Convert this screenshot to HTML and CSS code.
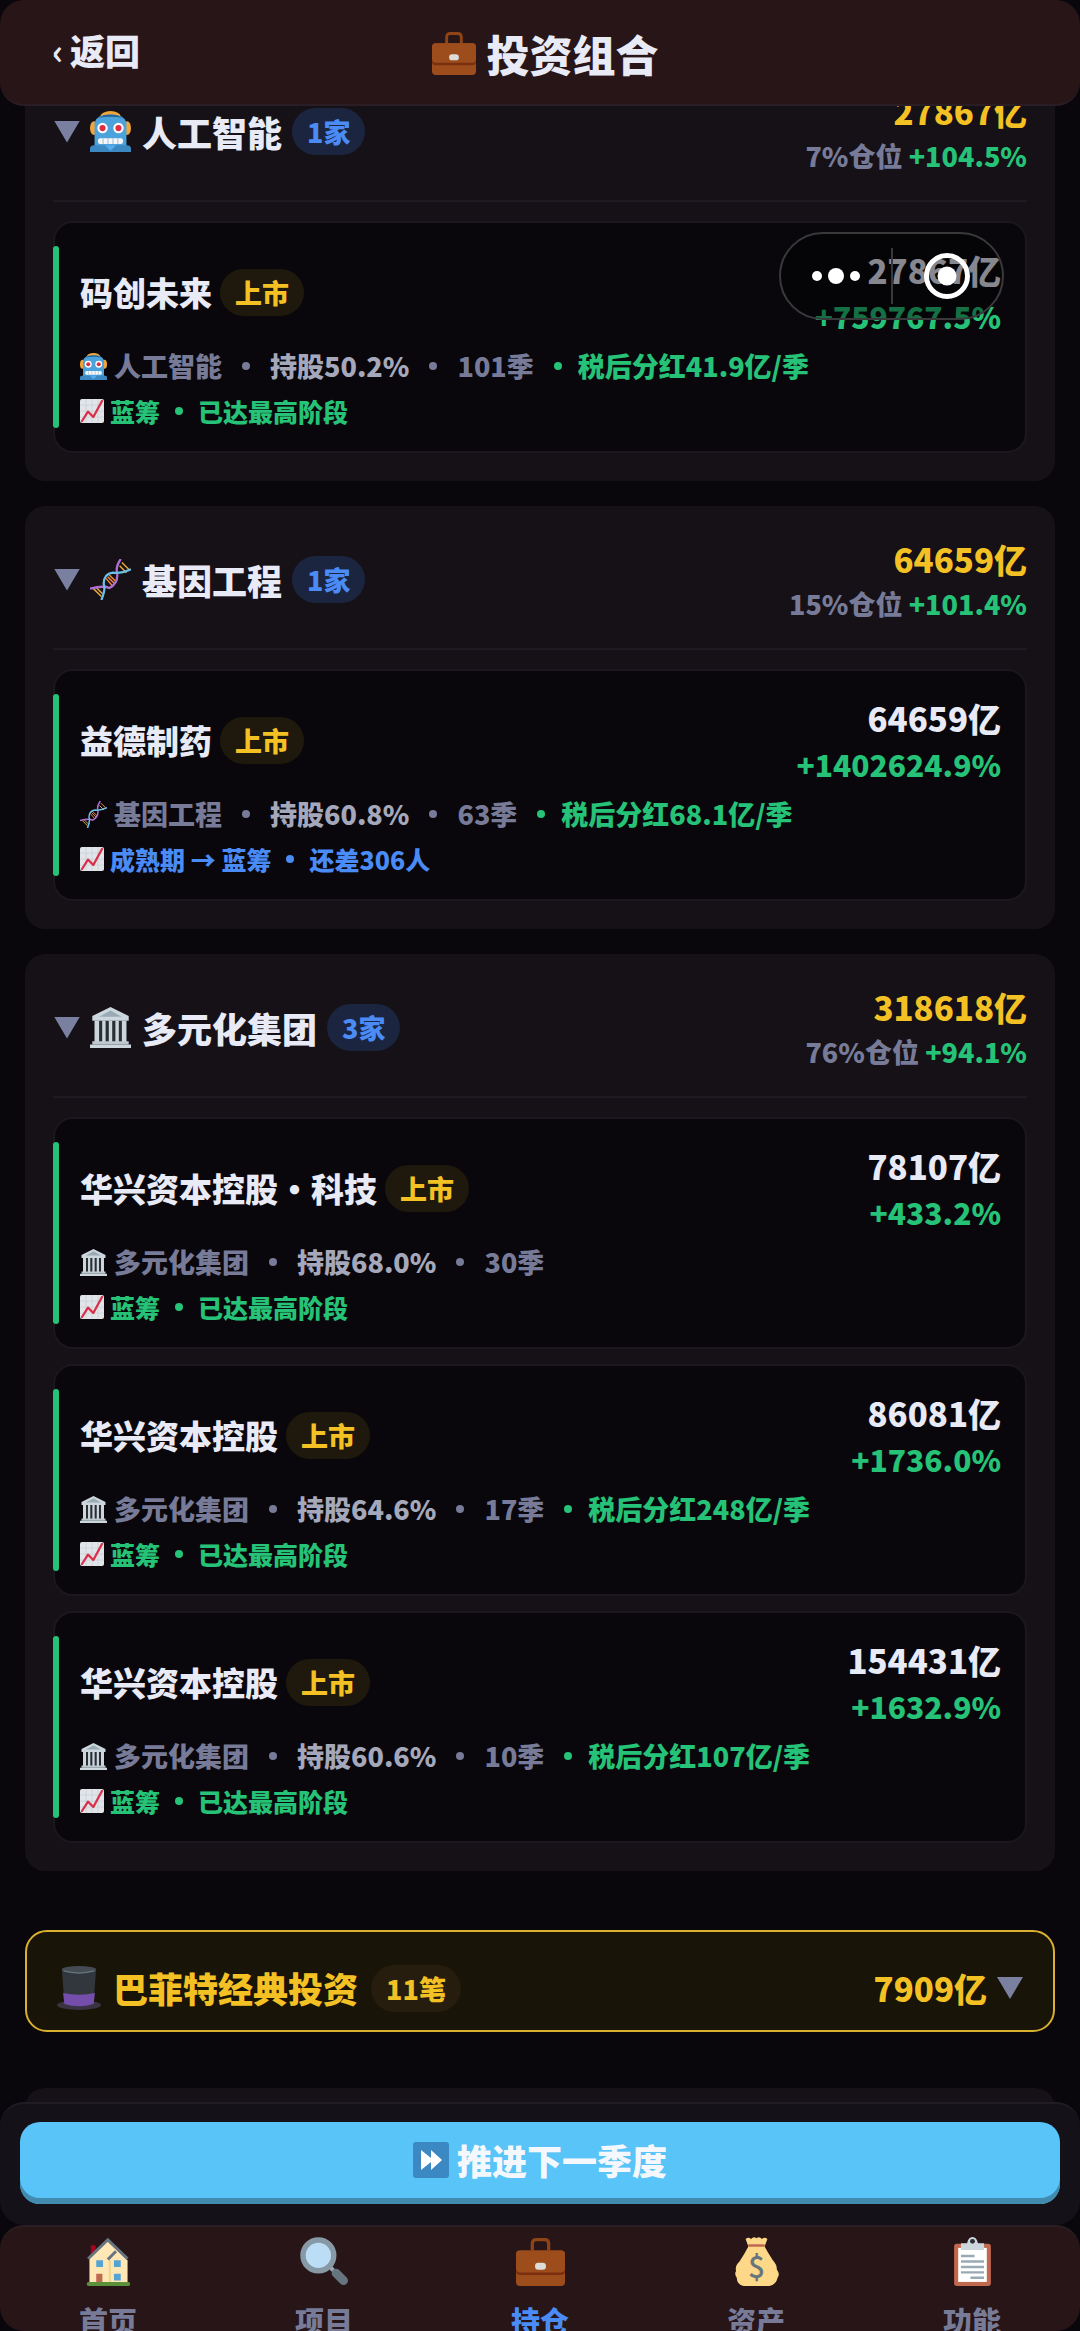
FILE: index.html
```html
<!DOCTYPE html>
<html lang="zh-CN">
<head>
  <meta charset="UTF-8">
  <meta name="viewport" content="width=device-width, initial-scale=1.0">
  <title>投资组合</title>
  <link rel="stylesheet" href="styles.css">
</head>
<body>

<!-- 图标 -->
<svg class="sprite" aria-hidden="true">
  <symbol id="i-case" viewBox="0 0 36 36">
    <path d="M12 10V5q0-3 3-3h6q3 0 3 3v5" fill="none" stroke="#8f4416" stroke-width="2.4"/>
    <rect x="0" y="10" width="36" height="26" rx="3" fill="#9c4d1b"/>
    <path d="M0 23v2q0 3 3 3h30q3 0 3-3v-2z" fill="#7a2f10"/>
    <path d="M3 10h30q3 0 3 3v10q0 3-3 3H3q-3 0-3-3V13q0-3 3-3z" fill="#9c4d1b"/>
    <rect x="14" y="19" width="8" height="5" rx="2.4" fill="#dcdcd8"/>
  </symbol>
  <symbol id="i-robot" viewBox="0 0 36 36">
    <ellipse cx="18" cy="5" rx="9" ry="5" fill="#f0a53a"/>
    <ellipse cx="3.4" cy="15" rx="3.4" ry="6" fill="#f0a53a"/>
    <ellipse cx="32.6" cy="15" rx="3.4" ry="6" fill="#f0a53a"/>
    <path d="M4 36V10Q6 3 18 3t14 7v26z" fill="#4ca3dc"/>
    <path d="M8 6q3-3 10-3t10 3q-4-1-10-1T8 6z" fill="#226699"/>
    <path d="M0 36v-3q0-3 4-3h28q4 0 4 3v3z" fill="#3b88c3"/>
    <path d="M13 30h10l-5 5z" fill="#55acee"/>
    <circle cx="11" cy="15" r="4.6" fill="#fff"/>
    <circle cx="25" cy="15" r="4.6" fill="#fff"/>
    <circle cx="11" cy="15" r="2.7" fill="#dd2e44"/>
    <circle cx="25" cy="15" r="2.7" fill="#dd2e44"/>
    <rect x="7" y="24" width="22" height="5" rx="2" fill="#f5f8fa"/>
    <path d="M11.500 24v5M15.800 24v5M20.200 24v5M24.500 24v5" stroke="#a9c4d6" stroke-width="1"/>
  </symbol>
  <symbol id="i-dna" viewBox="0 0 36 36">
    <path d="M3 26l7 7M5 24.500l6 6M28 3l6 6M26 6l6 6" stroke="#e8a83c" stroke-width="1.3"/>
    <path d="M14 17l6 7M17 14l6 6M15.500 15.500l6 6" stroke="#f08a3c" stroke-width="1.3"/>
    <path d="M0 26Q12 23 17 25.500Q24 22 24 14Q22 7 27 0" fill="none" stroke="#b06fd0" stroke-width="2"/>
    <path d="M10 36Q14 26 12 22Q12 13 20 12Q27 13 36 9" fill="none" stroke="#6cc0e8" stroke-width="2"/>
  </symbol>
  <symbol id="i-bank" viewBox="0 0 36 36">
    <path d="M4 11h28v21H4z" fill="#292f33"/>
    <path d="M18 0L2 8v4h32V8z" fill="#ccd6dd"/>
    <path d="M18 3L8 8.500h20z" fill="#9aaab4"/>
    <path d="M4 12h4v19H4zM10.700 12h3v19h-3zM16.500 12h3v19h-3zM22.300 12h3v19h-3zM28 12h4v19h-4z" fill="#ccd6dd"/>
    <path d="M2 30h32v3H2z" fill="#bdc8cf"/>
    <path d="M0 33h36v3H0z" fill="#ccd6dd"/>
  </symbol>
  <symbol id="i-chart" viewBox="0 0 36 36">
    <rect width="36" height="36" rx="3" fill="#e1e4e8"/>
    <path d="M0 9h36M0 18h36M0 27h36M9 0v36M18 0v36M27 0v36" stroke="#c3cdd4" stroke-width="1"/>
    <path d="M3 33l9-14 8 8L33 3" fill="none" stroke="#d8304a" stroke-width="3.400" stroke-linecap="round" stroke-linejoin="round"/>
  </symbol>
  <symbol id="i-hat" viewBox="0 0 36 36">
    <ellipse cx="18" cy="32" rx="18" ry="4" fill="#3a3442"/>
    <path d="M4 2h28l-2 28q-12 4-24 0z" fill="#31373d"/>
    <path d="M5 22q13 3 26 0l-1 9q-12 4-24 0z" fill="#744eaa"/>
    <ellipse cx="18" cy="3" rx="14" ry="3" fill="#444b52"/>
    <path d="M5.500 4q12.500 3.500 25 0" fill="none" stroke="#66757f" stroke-width="1"/>
  </symbol>
  <symbol id="i-next" viewBox="0 0 36 36">
    <rect width="36" height="36" rx="3" fill="#3b88c3"/>
    <path d="M8 8l10 8V8l11 10-11 10v-8L8 28z" fill="#fff"/>
  </symbol>
  <symbol id="i-home" viewBox="0 0 36 36">
    <path d="M5 6h3.500v7H5z" fill="#a0041e"/>
    <path d="M4 16L17 3l15 14v17H4z" fill="#ffe8b6"/>
    <path d="M19 17v16" stroke="#f2d48d" stroke-width="1.500"/>
    <path d="M3 16L17.500 2 32 16" fill="none" stroke="#66757f" stroke-width="2.200"/>
    <path d="M17.500 16.500l6-6" stroke="#66757f" stroke-width="2.200"/>
    <path d="M9 17h5v5H9zM22 17h5v5h-5zM22 27h5v5h-5z" fill="#55a3d3"/>
    <path d="M9 27h4.500v7H9z" fill="#c1694f"/>
    <rect x="2" y="33" width="32" height="3" rx="1.500" fill="#5c913b"/>
  </symbol>
  <symbol id="i-search" viewBox="0 0 36 36">
    <path d="M22 22l4 4" stroke="#9aaab4" stroke-width="3"/>
    <path d="M26.500 26.500l5.500 5.500" stroke="#66757f" stroke-width="6.500" stroke-linecap="round"/>
    <circle cx="13.500" cy="13.500" r="11.300" fill="#bbddf5" stroke="#8899a6" stroke-width="4"/>
  </symbol>
  <symbol id="i-money" viewBox="0 0 36 36">
    <path d="M12 7L10 1.500q2-2 4 0 2-2.500 4-.5 2-2 4 .5 2-2 4 0L24 7q2 4 6 10 3 3 3 7 2.500 3 .5 6-1 5-6 6h-19q-5-1-5-6-2-3-.5-5-1-4 2.500-7 4-6 6.500-11z" fill="#fdd888"/>
    <path d="M12 6.300h12" stroke="#bf6952" stroke-width="1.800"/>
    <text x="18" y="30" class="dollar">$</text>
  </symbol>
  <symbol id="i-list" viewBox="0 0 36 36">
    <rect x="4.500" y="5" width="27" height="31" rx="2" fill="#c1694f"/>
    <rect x="7.500" y="8" width="21" height="25" fill="#fff"/>
    <path d="M9.500 4.500H14q1-4.500 4-4.500t4 4.500h4.500V9.500h-17z" fill="#ccd6dd"/>
    <circle cx="18" cy="3.200" r="1.800" fill="#292f33"/>
    <path d="M9.500 14h10M9.500 18h17M9.500 22h17M9.500 26h17M16.500 30h10" stroke="#99aab5" stroke-width="1.800"/>
  </symbol>
</svg>

<div class="app">
  <header class="topbar">
    <button class="back" type="button"><span class="chevron">‹</span>返回</button>
    <h1 class="page-title"><svg class="icon"><use href="#i-case"/></svg>投资组合</h1>
  </header>

  <main class="content">
    <section class="group">
      <div class="group-head">
        <div class="group-name">
          <i class="caret"></i>
          <svg class="icon"><use href="#i-robot"/></svg>
          <h2>人工智能</h2>
          <span class="badge blue">1家</span>
        </div>
        <div class="group-sum">
          <div class="total">27867亿</div>
          <div class="ratio">7%仓位 <span class="up">+104.5%</span></div>
        </div>
      </div>
      <article class="card">
        <div class="card-head">
          <div class="card-name"><h3>码创未来</h3><span class="badge gold">上市</span></div>
          <div class="card-value">
            <div class="worth">27867亿</div>
            <div class="gain">+759767.5%</div>
          </div>
        </div>
        <div class="meta"><svg class="icon"><use href="#i-robot"/></svg>人工智能<b class="dot"></b><span class="share">持股50.2%</span><b class="dot"></b>101季<span class="up"><b class="dot near"></b>税后分红41.9亿/季</span></div>
        <div class="stage"><svg class="icon"><use href="#i-chart"/></svg>蓝筹<b class="dot"></b>已达最高阶段</div>
      </article>
    </section>

    <section class="group">
      <div class="group-head">
        <div class="group-name">
          <i class="caret"></i>
          <svg class="icon"><use href="#i-dna"/></svg>
          <h2>基因工程</h2>
          <span class="badge blue">1家</span>
        </div>
        <div class="group-sum">
          <div class="total">64659亿</div>
          <div class="ratio">15%仓位 <span class="up">+101.4%</span></div>
        </div>
      </div>
      <article class="card">
        <div class="card-head">
          <div class="card-name"><h3>益德制药</h3><span class="badge gold">上市</span></div>
          <div class="card-value">
            <div class="worth">64659亿</div>
            <div class="gain">+1402624.9%</div>
          </div>
        </div>
        <div class="meta"><svg class="icon"><use href="#i-dna"/></svg>基因工程<b class="dot"></b><span class="share">持股60.8%</span><b class="dot"></b>63季<span class="up"><b class="dot near"></b>税后分红68.1亿/季</span></div>
        <div class="stage growing"><svg class="icon"><use href="#i-chart"/></svg>成熟期 → 蓝筹<b class="dot"></b>还差306人</div>
      </article>
    </section>

    <section class="group">
      <div class="group-head">
        <div class="group-name">
          <i class="caret"></i>
          <svg class="icon"><use href="#i-bank"/></svg>
          <h2>多元化集团</h2>
          <span class="badge blue">3家</span>
        </div>
        <div class="group-sum">
          <div class="total">318618亿</div>
          <div class="ratio">76%仓位 <span class="up">+94.1%</span></div>
        </div>
      </div>
      <article class="card">
        <div class="card-head">
          <div class="card-name"><h3>华兴资本控股•科技</h3><span class="badge gold">上市</span></div>
          <div class="card-value">
            <div class="worth">78107亿</div>
            <div class="gain">+433.2%</div>
          </div>
        </div>
        <div class="meta"><svg class="icon"><use href="#i-bank"/></svg>多元化集团<b class="dot"></b><span class="share">持股68.0%</span><b class="dot"></b>30季</div>
        <div class="stage"><svg class="icon"><use href="#i-chart"/></svg>蓝筹<b class="dot"></b>已达最高阶段</div>
      </article>
      <article class="card">
        <div class="card-head">
          <div class="card-name"><h3>华兴资本控股</h3><span class="badge gold">上市</span></div>
          <div class="card-value">
            <div class="worth">86081亿</div>
            <div class="gain">+1736.0%</div>
          </div>
        </div>
        <div class="meta"><svg class="icon"><use href="#i-bank"/></svg>多元化集团<b class="dot"></b><span class="share">持股64.6%</span><b class="dot"></b>17季<span class="up"><b class="dot near"></b>税后分红248亿/季</span></div>
        <div class="stage"><svg class="icon"><use href="#i-chart"/></svg>蓝筹<b class="dot"></b>已达最高阶段</div>
      </article>
      <article class="card">
        <div class="card-head">
          <div class="card-name"><h3>华兴资本控股</h3><span class="badge gold">上市</span></div>
          <div class="card-value">
            <div class="worth">154431亿</div>
            <div class="gain">+1632.9%</div>
          </div>
        </div>
        <div class="meta"><svg class="icon"><use href="#i-bank"/></svg>多元化集团<b class="dot"></b><span class="share">持股60.6%</span><b class="dot"></b>10季<span class="up"><b class="dot near"></b>税后分红107亿/季</span></div>
        <div class="stage"><svg class="icon"><use href="#i-chart"/></svg>蓝筹<b class="dot"></b>已达最高阶段</div>
      </article>
    </section>

    <section class="classic">
      <svg class="icon"><use href="#i-hat"/></svg>
      <h2>巴菲特经典投资</h2>
      <span class="badge gold">11笔</span>
      <span class="classic-total">7909亿</span>
      <i class="caret"></i>
    </section>

    <section class="group"></section>
  </main>

  <div class="action">
    <button class="next" type="button"><svg class="icon"><use href="#i-next"/></svg>推进下一季度</button>
  </div>

  <nav class="tabbar">
    <a href="#"><svg class="icon"><use href="#i-home"/></svg>首页</a>
    <a href="#"><svg class="icon"><use href="#i-search"/></svg>项目</a>
    <a href="#" class="active"><svg class="icon"><use href="#i-case"/></svg>持仓</a>
    <a href="#"><svg class="icon"><use href="#i-money"/></svg>资产</a>
    <a href="#"><svg class="icon"><use href="#i-list"/></svg>功能</a>
  </nav>

  <!-- 小程序胶囊按钮 -->
  <div class="capsule">
    <button type="button" aria-label="更多"><svg class="more" viewBox="0 0 48 16"><circle cx="5" cy="8" r="5"/><circle cx="24" cy="8" r="8"/><circle cx="43" cy="8" r="5"/></svg></button>
    <button type="button" aria-label="关闭"><svg class="close" viewBox="0 0 46 46"><circle cx="23" cy="23" r="20.500" fill="none" stroke="#fff" stroke-width="5"/><circle cx="23" cy="23" r="9.500"/></svg></button>
  </div>
</div>

</body>
</html>
```

FILE: styles.css
```css
* {
  box-sizing: border-box;
  margin: 0;
  padding: 0;
}

body {
  background: #000;
  color: #e8eaf6;
  font-family: "Noto Sans CJK SC", sans-serif;
  font-weight: 900;
}

button {
  border: 0;
  background: none;
  color: inherit;
  font: inherit;
  cursor: pointer;
}

h1, h2, h3 {
  font-weight: 900;
}

.sprite {
  display: none;
}

.icon {
  flex: none;
  overflow: visible;
}

.dollar {
  font-size: 22px;
  font-weight: 500;
  text-anchor: middle;
  fill: #67757f;
}

.app {
  position: relative;
  display: flex;
  flex-direction: column;
  height: 100vh;
  overflow: hidden;
  background: #09070c;
}

/* 顶部栏 */
.topbar {
  position: relative;
  z-index: 2;
  display: grid;
  grid-template-columns: 1fr auto 1fr;
  align-items: center;
  height: 106px;
  padding: 2px 42px 0 52px;
  border-bottom: 2px solid #2a1e24;
  border-radius: 24px;
  background: #271517;
}

.back {
  display: flex;
  align-items: center;
  justify-self: start;
  padding-bottom: 6px;
  font-size: 35px;
  line-height: 48px;
}

.chevron {
  width: 18px;
  font-weight: 700;
  text-align: left;
}

.page-title {
  display: flex;
  align-items: center;
  gap: 11px;
  font-size: 43px;
  line-height: 60px;
}

.page-title .icon {
  width: 44px;
  height: 44px;
}

/* 列表 */
.content {
  flex: 1;
  min-height: 0;
  margin: -48px 0 -24px;
  padding: 0 25px;
  overflow: hidden;
}

.group {
  min-height: 80px;
  margin-bottom: 25px;
  padding: 28px;
  border-radius: 20px;
  background: #151116;
}

.group-head {
  display: flex;
  justify-content: space-between;
  align-items: center;
  margin-bottom: 19px;
  padding: 2px 0 22px;
  border-bottom: 2px solid #1d1a21;
}

.group-name {
  display: flex;
  align-items: center;
  padding-bottom: 3px;
}

.group-name .icon {
  width: 41px;
  height: 41px;
  margin: 0 11px 0 10px;
}

.group-name h2,
.classic h2 {
  font-size: 35px;
  line-height: 48px;
}

.caret {
  width: 26px;
  height: 22px;
  margin-left: 1px;
  background: #7a80a0;
  clip-path: polygon(0 0, 100% 0, 50% 100%);
}

.badge {
  padding: 4px 15px;
  border-radius: 24px;
  font-size: 27px;
  line-height: 39px;
}

.badge.blue {
  margin-left: 10px;
  background: #1b2540;
  color: #4a8bf5;
}

.badge.gold {
  margin-left: 8px;
  background: #1f190d;
  color: #f3c124;
}

.group-sum,
.card-value {
  text-align: right;
}

.total {
  color: #f3c124;
  font-size: 33px;
  line-height: 46px;
}

.ratio {
  color: #777b98;
  font-size: 27px;
  line-height: 44px;
}

.up {
  color: #25c277;
}

/* 公司卡片 */
.card {
  position: relative;
  padding: 24px 24px 22px 25px;
  border: 2px solid #1a181e;
  border-radius: 20px;
  background: #09070c;
}

.card + .card {
  margin-top: 15px;
}

.card::before {
  content: "";
  position: absolute;
  top: 23px;
  bottom: 23px;
  left: -2px;
  width: 6px;
  border-radius: 3px;
  background: #25c277;
}

.card-head,
.card-name,
.meta,
.stage {
  display: flex;
  align-items: center;
}

.card-head {
  justify-content: space-between;
}

.card-name {
  padding-bottom: 2px;
}

.card-name h3 {
  font-size: 33px;
  line-height: 48px;
}

.worth {
  font-size: 33px;
  line-height: 46px;
}

.gain {
  color: #25c277;
  font-size: 30px;
  line-height: 46px;
}

.meta {
  margin-top: 7px;
  color: #777b98;
  font-size: 27px;
  line-height: 40px;
}

.meta .icon {
  width: 27px;
  height: 27px;
  margin-right: 7px;
}

.meta .up {
  display: flex;
  align-items: center;
}

.share {
  color: #a5a7ba;
}

.dot {
  width: 8px;
  height: 8px;
  margin: 0 20px;
  border-radius: 50%;
  background: currentColor;
}

.dot.near {
  margin-right: 16px;
}

.stage {
  margin-top: 7px;
  color: #25c277;
  font-size: 25px;
  line-height: 36px;
}

.stage .icon {
  width: 24px;
  height: 24px;
  margin-right: 6px;
}

.stage .dot {
  width: 8px;
  height: 8px;
  margin: 0 15px;
}

.stage.growing {
  color: #4a8bf5;
}

/* 巴菲特经典投资 */
.classic {
  display: flex;
  align-items: center;
  margin: 59px 0 56px;
  padding: 32px 30px 18px;
  border: 2px solid #d9b02f;
  border-radius: 22px;
  background: #191408;
  color: #f3c124;
}

.classic .icon {
  width: 44px;
  height: 44px;
  margin-right: 12px;
}

.classic .badge {
  margin-left: 13px;
  background: #261d0e;
}

.classic-total {
  margin-left: auto;
  margin-right: 9px;
  font-size: 33px;
  line-height: 46px;
}

/* 底部操作 */
.action {
  position: relative;
  z-index: 1;
  padding: 18px 20px 21px;
  border-top: 2px solid #201c24;
  border-radius: 24px;
  background: #141118;
}

.next {
  display: flex;
  justify-content: center;
  align-items: center;
  gap: 8px;
  width: 100%;
  height: 82px;
  padding-bottom: 6px;
  border-radius: 20px;
  background: #58c4f7;
  box-shadow: inset 0 -6px 0 #418bae;
  color: #f4f8fd;
  font-size: 35px;
  line-height: 48px;
}

.next .icon {
  width: 36px;
  height: 36px;
}

.tabbar {
  position: relative;
  z-index: 1;
  display: flex;
  height: 106px;
  padding-top: 10px;
  overflow: hidden;
  border-top: 2px solid #2a1e24;
  border-radius: 24px;
  background: #271517;
}

.tabbar a {
  display: flex;
  flex: 1;
  flex-direction: column;
  align-items: center;
  gap: 13px;
  color: #777b98;
  font-size: 29px;
  line-height: 42px;
  text-decoration: none;
}

.tabbar .active {
  color: #4a8bf5;
}

.tabbar .icon {
  width: 49px;
  height: 49px;
}

/* 胶囊 */
.capsule {
  position: absolute;
  z-index: 3;
  top: 232px;
  right: 76px;
  display: flex;
  align-items: center;
  width: 225px;
  height: 88px;
  border: 2px solid #39393c;
  border-radius: 45px;
  background: rgba(0, 0, 0, 0.42);
}

.capsule button {
  display: flex;
  flex: 1;
  justify-content: center;
  align-items: center;
  height: 56px;
}

.capsule button + button {
  border-left: 2px solid #39393c;
}

.capsule svg {
  fill: #fff;
}

.more {
  width: 48px;
  height: 16px;
}

.close {
  width: 46px;
  height: 46px;
}
```
